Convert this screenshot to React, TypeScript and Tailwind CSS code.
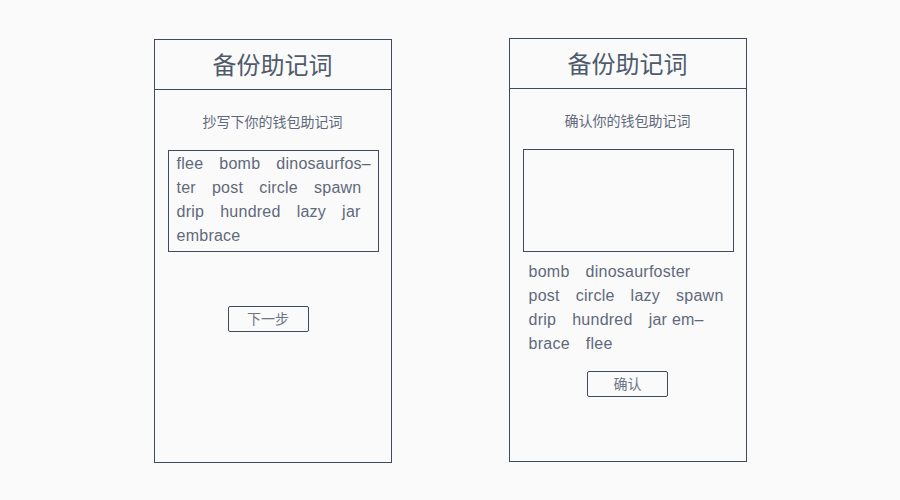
const font = { fontFamily: '"Liberation Sans", "Noto Sans CJK SC", sans-serif' }

function WordLine({ words }: { words: string[] }) {
  return (
    <div className="flex h-6 items-center gap-x-[16px] whitespace-nowrap tracking-[0.25px]">
      {words.map((w, i) => (
        <span key={i}>{w}</span>
      ))}
    </div>
  )
}

function Panel({ children }: { children: React.ReactNode }) {
  return (
    <div className="flex h-[424px] w-[238px] flex-col border border-[#3f4a5c] bg-[#fafafb]">
      <div className="flex h-[50px] shrink-0 items-center justify-center border-b border-[#3f4a5c] pt-[3px] text-[24px] text-[#4f5a6b]">
        备份助记词
      </div>
      {children}
    </div>
  )
}

export default function App() {
  return (
    <div
      className="flex h-[500px] w-[900px] items-start justify-center gap-[117px] bg-[#fafafa] pt-[38px] text-[#5f697a]"
      style={font}
    >
      <div className="mt-px">
        <Panel>
          <div className="flex h-[60px] items-center justify-center pt-[4px] text-[14px]">抄写下你的钱包助记词</div>
          <div className="ml-[13px] mr-[12px] border border-[#3f4a5c] px-2 pt-px pb-[3px] text-[16px]">
            <WordLine words={['flee', 'bomb', 'dinosaurfos–']} />
            <WordLine words={['ter', 'post', 'circle', 'spawn']} />
            <WordLine words={['drip', 'hundred', 'lazy', 'jar']} />
            <WordLine words={['embrace']} />
          </div>
          <div className="mt-[54px] flex justify-center pr-[9px]">
            <button className="h-[26px] w-[81px] rounded-[2px] border border-[#3f4a5c] text-[14px] text-[#6b7484]">
              下一步
            </button>
          </div>
        </Panel>
      </div>
      <Panel>
        <div className="flex h-[60px] items-center justify-center pt-[4px] text-[14px]">确认你的钱包助记词</div>
        <div className="ml-[13px] mr-[12px] h-[103px] border border-[#3f4a5c]" />
        <div className="mt-[8px] px-[19px] text-[16px]">
          <WordLine words={['bomb', 'dinosaurfoster']} />
          <WordLine words={['post', 'circle', 'lazy', 'spawn']} />
          <div className="flex h-6 items-center gap-x-[16px] whitespace-nowrap tracking-[0.25px]">
            <span>drip</span>
            <span>hundred</span>
            <span>jar em–</span>
          </div>
          <WordLine words={['brace', 'flee']} />
        </div>
        <div className="mt-[15px] flex justify-center">
          <button className="h-[26px] w-[81px] rounded-[2px] border border-[#3f4a5c] text-[14px] text-[#6b7484]">
            确认
          </button>
        </div>
      </Panel>
    </div>
  )
}
